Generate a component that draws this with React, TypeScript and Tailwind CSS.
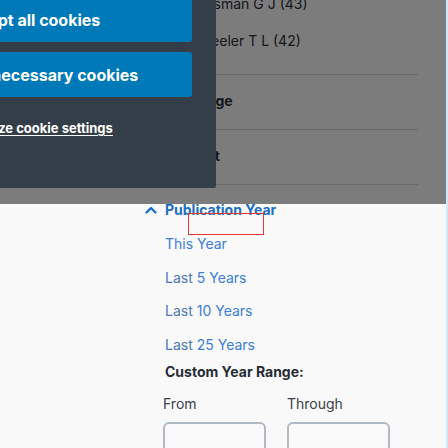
export default function App() {
  const authors = [
    { name: "Rossman G J", count: 43 },
    { name: "Wheeler T L", count: 42 },
  ];

  const yearLinks = [
    { lead: "", rest: "This Year" },
    { lead: "Last", rest: "5 Years" },
    { lead: "Last", rest: "10 Years" },
    { lead: "Last", rest: "25 Years" },
  ];

  return (
    <div className="relative w-[448px] h-[448px] overflow-hidden bg-[#f9f9f9] font-['Inter',sans-serif] border-r-2 border-[#d6e6f4]">
      {/* Filter sidebar */}
      <div className="ml-[145px] w-[273px] -mt-[15px]">
        {/* Authors list */}
        <ul className="pb-[15px] border-b border-[#d2d4d8]">
          {authors.map((a) => (
            <li key={a.name} className="h-[37px] flex items-center pl-[44px] text-[14px] text-[#2b2f3a]">
              {a.name} ({a.count})
            </li>
          ))}
        </ul>

        {/* Collapsed sections */}
        {["Language", "Content"].map((s) => (
          <div key={s} className="h-[55px] flex items-center pb-[3px] gap-[8px] border-b border-[#d2d4d8]">
            <svg viewBox="0 0 12 8" className="w-[12px] h-[8px] text-[#2b2f3a]" fill="none" stroke="currentColor" strokeWidth="2.4" strokeLinecap="round" strokeLinejoin="round">
              <polyline points="1.5,1.5 6,6 10.5,1.5" />
            </svg>
            <span className="text-[14px] font-bold text-[#2b2f3a]">{s}</span>
          </div>
        ))}

        {/* Publication Year */}
        <div className="pt-[14px] flex items-center gap-[8px] h-[35px] mb-[7px]">
          <svg viewBox="0 0 12 8" className="w-[12px] h-[8px] text-[#1b6ec2]" fill="none" stroke="currentColor" strokeWidth="2.4" strokeLinecap="round" strokeLinejoin="round">
            <polyline points="1.5,6.5 6,2 10.5,6.5" />
          </svg>
          <span className="text-[14px] font-bold text-[#1b6ec2] leading-[20px]">Publication Year</span>
        </div>
        <ul className="pl-[20px]">
          {yearLinks.map((y) => (
            <li key={y.rest} className="h-[33.5px] flex items-center gap-[4px] text-[14px] text-[#3b7dd8]">
              {y.lead && <span className="text-[#4a78b8]">{y.lead}</span>}
              <span>{y.rest}</span>
            </li>
          ))}
        </ul>
        <p className="mt-[1px] pl-[20px] leading-[20px] text-[14px] font-bold text-[#262b35]">Custom Year Range:</p>
        <div className="mt-[12px] pl-[18px] grid grid-cols-[124px_124px]">
          <label className="leading-[20px] text-[14px] text-[#3a3f4a]">From</label>
          <label className="leading-[20px] text-[14px] text-[#3a3f4a]">Through</label>
          <div className="mt-[8px] w-[103px] h-[40px] rounded-[6px] border-2 border-[#b1b9c3] bg-[#fafafa]" />
          <div className="mt-[8px] w-[103px] h-[40px] rounded-[6px] border-2 border-[#b1b9c3] bg-[#fafafa]" />
        </div>
      </div>

      {/* Focus box */}
      <div className="absolute left-[188px] top-[213px] w-[76px] h-[22px] border border-[#e53935]" />

      {/* Dim overlay */}
      <div className="absolute left-0 top-0 w-full h-[204px] bg-black/50" />

      {/* Cookie banner */}
      <div className="absolute left-0 top-0 w-[216px] h-[188px] bg-[#343e48] rounded-br-[2px]">
        <div className="-ml-[134px] -mt-[3px] w-[326px] flex flex-col gap-[10px]">
          <button className="h-[45px] rounded-[3px] bg-[#0079b9] text-center text-[16px] font-bold text-white">
            Accept all cookies
          </button>
          <button className="h-[45px] rounded-[3px] bg-[#0079b9] text-center text-[16px] font-bold text-white">
            Use only necessary cookies
          </button>
        </div>
        <div className="-ml-[134px] w-[326px] mt-[18px] text-center">
          <a className="text-[13px] font-bold text-white underline underline-offset-2">
            Customize cookie settings
          </a>
        </div>
      </div>
    </div>
  );
}
